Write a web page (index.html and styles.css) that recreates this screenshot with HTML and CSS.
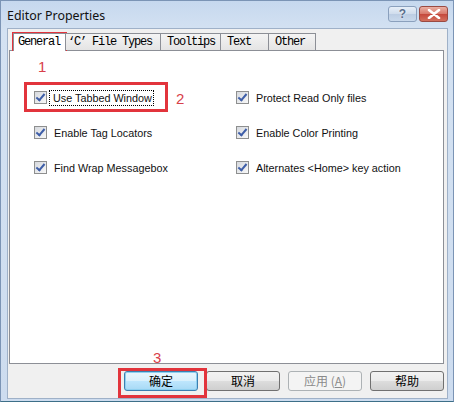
FILE: index.html
```html
<!DOCTYPE html>
<html>
<head>
<meta charset="utf-8">
<link rel="stylesheet" href="styles.css">
</head>
<body>
<div class="window">
  <div class="titlebar">
    <span class="title">Editor Properties</span>
    <div class="caption-btns">
      <span class="cap-btn help">?</span>
      <span class="cap-btn close">
        <svg width="14" height="10" viewBox="0 0 14 10"><path d="M2 1 L12 9 M12 1 L2 9" stroke="#fff" stroke-width="2.6" stroke-linecap="round"/></svg>
      </span>
    </div>
  </div>
  <div class="client">
    <div class="tabs">
      <span class="tab active t1">General</span>
      <span class="tab t2">‘C’ File Types</span>
      <span class="tab t3">Tooltips</span>
      <span class="tab t4">Text</span>
      <span class="tab t5">Other</span>
    </div>
    <div class="panel">
      <div class="grid">
        <label class="opt"><span class="cb"></span><span class="lbl focus">Use Tabbed Window</span></label>
        <label class="opt"><span class="cb"></span><span class="lbl">Protect Read Only files</span></label>
        <label class="opt"><span class="cb"></span><span class="lbl">Enable Tag Locators</span></label>
        <label class="opt"><span class="cb"></span><span class="lbl">Enable Color Printing</span></label>
        <label class="opt"><span class="cb"></span><span class="lbl">Find Wrap Messagebox</span></label>
        <label class="opt"><span class="cb"></span><span class="lbl">Alternates &lt;Home&gt; key action</span></label>
      </div>
    </div>
    <div class="buttons">
      <button class="btn default">确定</button>
      <button class="btn">取消</button>
      <button class="btn disabled">应用 (<u>A</u>)</button>
      <button class="btn">帮助</button>
    </div>
  </div>
  <div class="mark box1"></div>
  <div class="num n1">1</div>
  <div class="mark box2"></div>
  <div class="num n2">2</div>
  <div class="num n3">3</div>
  <div class="mark box3"></div>
</div>
</body>
</html>
```
FILE: styles.css
```css
html, body { margin: 0; padding: 0; background: #fff; }
.window {
  position: relative;
  width: 454px; height: 402px;
  box-sizing: border-box;
  background: linear-gradient(#c6d8ee, #d4e2f2 30px, #cddcef);
  border: 1px solid #7b94b5;
  border-bottom-color: #3d6f88;
  display: flex; flex-direction: column;
  padding: 0 5px 2px 6px;
  font-family: "Liberation Sans", Arial, sans-serif;
}
.titlebar {
  height: 27px;
  display: flex; align-items: center; justify-content: space-between;
}
.title {
  font-family: "Noto Sans", "Open Sans", sans-serif;
  font-size: 12.4px; color: #111;
  padding-top: 1px;
}
.caption-btns { display: flex; gap: 2px; align-self: flex-start; margin-top: 5px; }
.cap-btn {
  width: 29px; height: 16px; box-sizing: border-box;
  border-radius: 3px;
  display: flex; align-items: center; justify-content: center;
}
.help {
  border: 1px solid #8aa0bd;
  background: linear-gradient(#e6eef8, #cfdcec 50%, #bccde3 51%, #c9d9ec);
  color: #5a6f8d; font: bold 12px "Liberation Sans", sans-serif;
  text-shadow: 0 0 2px #fff;
}
.close {
  border: 1px solid #9a4a42;
  background: linear-gradient(#eab0a4, #d8786a 50%, #c5483c 51%, #d3705e);
}
.client {
  flex: 1;
  background: #f0f0f0;
  border: 1px solid #9fb1c8;
  display: flex; flex-direction: column;
}
.tabs { display: flex; margin: 3px 0 0 5px; height: 18px; align-items: flex-end; position: relative; z-index: 1; }
.tab {
  box-sizing: border-box;
  height: 17px;
  border: 1px solid #8c8f96; border-bottom: none; border-left: none;
  background: linear-gradient(#f4f4f4, #e4e4e4);
  font-family: "Liberation Mono", "Courier New", monospace;
  font-size: 12px; letter-spacing: -1.2px;
  line-height: 16px; color: #000;
  padding-left: 4px;
  white-space: pre;
}
.tab.t1 { border-left: 1px solid #8c8f96; }
.tab.active { height: 18px; background: #fff; width: 53px; padding-left: 4px; margin-bottom: -1px; }
.t2 { width: 95px; padding-left: 2px; }
.t3 { width: 60px; padding-left: 6px; }
.t4 { width: 48px; padding-left: 6px; }
.t5 { width: 47px; padding-left: 6px; }
.panel {
  margin-left: 1px; width: 435px; height: 314px;
  box-sizing: border-box;
  background: #fff;
  border: 1px solid #8c8f96;
}
.grid {
  display: grid;
  grid-template-columns: 202px 1fr;
  row-gap: 22px;
  padding: 40px 0 0 24px;
}
.opt { display: flex; align-items: center; height: 13px; font-size: 10.8px; color: #111; }
.cb {
  width: 13px; height: 13px; box-sizing: border-box;
  border: 1px solid #8e8f8f;
  background: linear-gradient(135deg, #d6d9de, #f8f8f8);
  position: relative; margin-right: 6px; flex: none;
}
.cb::after {
  content: ""; position: absolute; left: 3px; top: 0px;
  width: 3px; height: 7px;
  border: solid #3e5ea8; border-width: 0 2px 2px 0;
  transform: rotate(40deg);
}
.lbl { padding: 1px 1px; line-height: 12px; }
.lbl.focus { outline: 1px dotted #000; outline-offset: 0; margin-left: -3px; padding-left: 3px; }
.buttons {
  display: flex; gap: 8px;
  margin: 7px 0 0 116px;
}
.btn {
  width: 74px; height: 20px; box-sizing: border-box;
  border: 1px solid #707070; border-radius: 3px;
  background: linear-gradient(#f2f2f2, #ebebeb 50%, #dddddd 51%, #cfcfcf);
  font-family: "Noto Sans CJK SC", sans-serif; font-size: 12px; line-height: 16px;
  color: #000; padding: 0;
}
.btn.default {
  border-color: #3c7fb1;
  box-shadow: inset 0 0 0 1px #8fd0f0;
  background: linear-gradient(#eaf6fd, #d9f0fc 50%, #bee6fd 51%, #a7d9f5);
}
.btn.disabled { border-color: #adb2b5; background: #f4f4f4; color: #8a8a8a; }
.btn u { text-decoration: underline; }
.mark { position: absolute; border: 3px solid #e2343c; box-sizing: border-box; }
.box1 { left: 11px; top: 31px; width: 55px; height: 19px; }
.box2 { left: 23px; top: 81px; width: 144px; height: 30px; }
.box3 { left: 117px; top: 367px; width: 89px; height: 30px; }
.num { position: absolute; color: #d8404a; font: 15px "Liberation Sans", sans-serif; }
.n1 { left: 37px; top: 57px; }
.n2 { left: 175px; top: 89px; }
.n3 { left: 152px; top: 348px; }
```
